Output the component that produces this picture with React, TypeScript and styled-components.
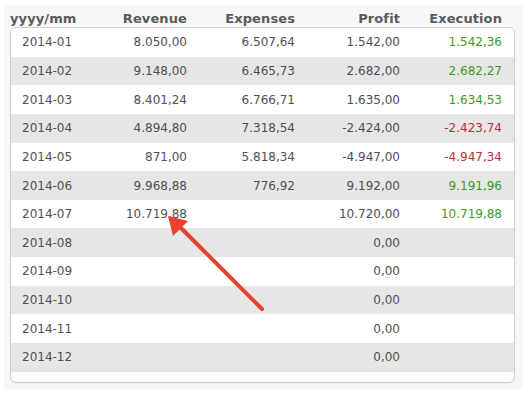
import React from "react";
import styled, { createGlobalStyle } from "styled-components";

const Global = createGlobalStyle`
  html, body { margin: 0; padding: 0; background: #ffffff; }
  body { font-family: "DejaVu Sans", Verdana, sans-serif; }
`;

const Page = styled.div`
  width: 530px;
  height: 396px;
  position: relative;
  overflow: hidden;
  background: #ffffff;
`;

const Panel = styled.div`
  position: relative;
  margin: 5px 7px 0 4px;
  height: 384px;
  background: #f7f7f7;
  padding: 0 4px 0 6px;
`;

const cols = "80px 108px 108px 105px 102px";

const HeaderRow = styled.div`
  display: grid;
  grid-template-columns: ${cols};
  height: 22px;
  padding: 0 1px;
  align-items: end;
`;

const HeadCell = styled.div<{ $left?: boolean }>`
  font-family: "DejaVu Sans", Verdana, sans-serif;
  font-weight: bold;
  font-size: 13px;
  color: #5a5a5a;
  line-height: 16px;
  text-align: ${(p) => (p.$left ? "left" : "right")};
  padding: ${(p) => (p.$left ? "0 0 0 0" : "0 12px 0 0")};
  margin-left: ${(p) => (p.$left ? "-1px" : "0")};
  letter-spacing: 0.1px;
`;

const Box = styled.div`
  box-sizing: border-box;
  width: 505px;
  height: 356px;
  border: 1px solid #cfcfcf;
  border-radius: 6px;
  background: #fcfcfc;
  overflow: hidden;
  box-shadow: 0 1px 1px rgba(0, 0, 0, 0.04);
`;

const Row = styled.div<{ $alt: boolean }>`
  display: grid;
  grid-template-columns: ${cols};
  height: 28.65px;
  align-items: center;
  background: ${(p) => (p.$alt ? "#e6e6e6" : "#ffffff")};
`;

type Tone = "plain" | "pos" | "neg";

const Cell = styled.div<{ $left?: boolean; $tone?: Tone }>`
  font-family: "DejaVu Sans", Verdana, sans-serif;
  font-size: 12px;
  color: ${(p) =>
    p.$tone === "pos" ? "#3f9a22" : p.$tone === "neg" ? "#b83240" : "#4f4f55"};
  text-align: ${(p) => (p.$left ? "left" : "right")};
  padding: ${(p) => (p.$left ? "0 0 0 11px" : "0 12px 0 0")};
  white-space: nowrap;
`;

const Arrow = styled.svg`
  position: absolute;
  left: 0;
  top: 0;
  pointer-events: none;
`;

type RowData = [string, string, string, string, string];

const rows: RowData[] = [
  ["2014-01", "8.050,00", "6.507,64", "1.542,00", "1.542,36"],
  ["2014-02", "9.148,00", "6.465,73", "2.682,00", "2.682,27"],
  ["2014-03", "8.401,24", "6.766,71", "1.635,00", "1.634,53"],
  ["2014-04", "4.894,80", "7.318,54", "-2.424,00", "-2.423,74"],
  ["2014-05", "871,00", "5.818,34", "-4.947,00", "-4.947,34"],
  ["2014-06", "9.968,88", "776,92", "9.192,00", "9.191,96"],
  ["2014-07", "10.719,88", "", "10.720,00", "10.719,88"],
  ["2014-08", "", "", "0,00", ""],
  ["2014-09", "", "", "0,00", ""],
  ["2014-10", "", "", "0,00", ""],
  ["2014-11", "", "", "0,00", ""],
  ["2014-12", "", "", "0,00", ""],
];

const toneOf = (v: string): Tone =>
  v === "" ? "plain" : v.startsWith("-") ? "neg" : "pos";

export default function App() {
  return (
    <Page>
      <Global />
      <Panel>
        <HeaderRow>
          <HeadCell $left>yyyy/mm</HeadCell>
          <HeadCell>Revenue</HeadCell>
          <HeadCell>Expenses</HeadCell>
          <HeadCell>Profit</HeadCell>
          <HeadCell>Execution</HeadCell>
        </HeaderRow>
        <Box>
          {rows.map((r, i) => (
            <Row key={r[0]} $alt={i % 2 === 1}>
              <Cell $left>{r[0]}</Cell>
              <Cell>{r[1]}</Cell>
              <Cell>{r[2]}</Cell>
              <Cell>{r[3]}</Cell>
              <Cell $tone={toneOf(r[4])}>{r[4]}</Cell>
            </Row>
          ))}
        </Box>
      </Panel>
      <Arrow width="530" height="396" viewBox="0 0 530 396">
        <line
          x1="262"
          y1="309"
          x2="180"
          y2="227"
          stroke="#e8412e"
          strokeWidth="4"
          strokeLinecap="round"
        />
        <polygon points="168,216 188,221 173,236" fill="#e8412e" />
      </Arrow>
    </Page>
  );
}
